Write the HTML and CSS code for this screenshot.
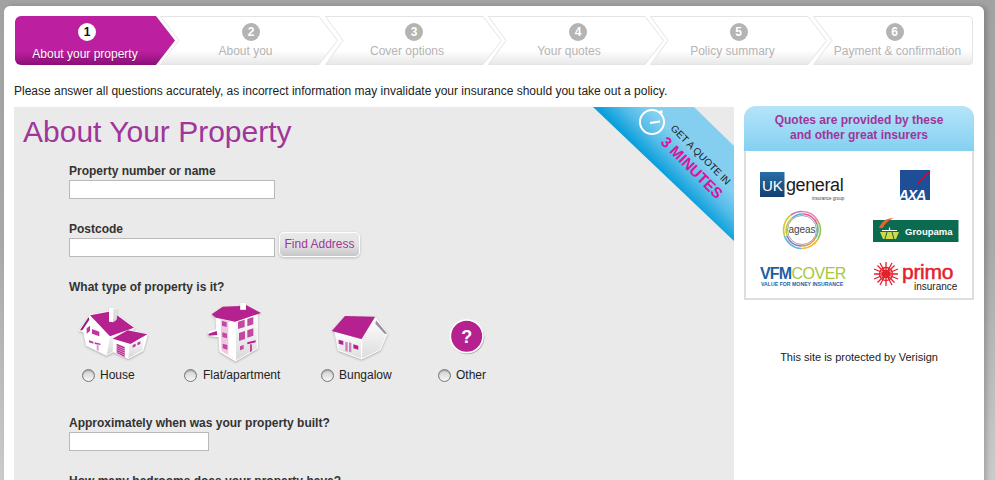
FILE: index.html
```html
<!DOCTYPE html>
<html lang="en">
<head>
<meta charset="utf-8">
<title>About Your Property</title>
<link rel="stylesheet" href="styles.css">
</head>
<body>
<div class="card">
  <nav class="stepper">
    <svg class="chevrons" width="958" height="50" viewBox="15 16 958 50">
      <defs>
        <linearGradient id="gOn" x1="0" y1="0" x2="0" y2="1"><stop offset="0" stop-color="#bc1f9f"/><stop offset=".72" stop-color="#bc1f9f"/><stop offset="1" stop-color="#8b0f78"/></linearGradient>
        <linearGradient id="gOff" x1="0" y1="0" x2="0" y2="1"><stop offset="0" stop-color="#fff"/><stop offset=".7" stop-color="#fff"/><stop offset="1" stop-color="#e8e8e8"/></linearGradient>
      </defs>
      <g fill="url(#gOff)" stroke="#e4e4e4">
        <path d="M160.500 16.500H319L337.500 40.500L319 64.500H160.500L179 40.500Z"/>
        <path d="M325.500 16.500H483L501.500 40.500L483 64.500H325.500L343 40.500Z"/>
        <path d="M488.500 16.500H645L663.500 40.500L645 64.500H488.500L506 40.500Z"/>
        <path d="M650.500 16.500H808L826.500 40.500L808 64.500H650.500L668 40.500Z"/>
        <path d="M813.500 16.500H969a3.500 3.500 0 0 1 3.500 3.500V61a3.500 3.500 0 0 1-3.500 3.500H813.500L832 40.500Z"/>
      </g>
      <path fill="url(#gOn)" d="M21 16H156L175 40.500L156 65H21a6 6 0 0 1-6-6V22a6 6 0 0 1 6-6Z"/>
    </svg>
    <div class="step step-on"><span class="num num1">1</span><span class="step-label">About your property</span></div>
    <div class="step"><span class="num num2">2</span><span class="step-label">About you</span></div>
    <div class="step"><span class="num num3">3</span><span class="step-label">Cover options</span></div>
    <div class="step"><span class="num num4">4</span><span class="step-label">Your quotes</span></div>
    <div class="step"><span class="num num5">5</span><span class="step-label">Policy summary</span></div>
    <div class="step"><span class="num num6">6</span><span class="step-label">Payment &amp; confirmation</span></div>
  </nav>

  <p class="intro">Please answer all questions accurately, as incorrect information may invalidate your insurance should you take out a policy.</p>

  <div class="columns">
    <main class="panel">
      <svg class="ribbon" width="141" height="135" viewBox="593 107 141 135">
        <defs>
          <linearGradient id="gRib" gradientUnits="userSpaceOnUse" x1="664" y1="174" x2="700" y2="138"><stop offset="0" stop-color="#0b9fdb"/><stop offset=".35" stop-color="#52bbe8"/><stop offset=".7" stop-color="#84cff0"/><stop offset="1" stop-color="#84cff0"/></linearGradient>
        </defs>
        <polygon fill="url(#gRib)" points="593,107 694,107 734,146 734,241"/>
        <g fill="none" stroke="#fff">
          <circle cx="652" cy="122" r="12" stroke-width="2"/>
          <circle cx="661" cy="112" r="1.800" fill="#fff" stroke="none"/>
          <path d="M650 123L660 121.500" stroke-width="1.800"/>
        </g>
        <text class="rib-small" transform="translate(670 129) rotate(45)">GET A QUOTE IN</text>
        <text class="rib-big" transform="translate(660 143) rotate(45)">3 MINUTES</text>
      </svg>

      <h1 class="title">About Your Property</h1>

      <div class="field">
        <label class="field-label">Property number or name</label>
        <input class="text-input" type="text">
      </div>
      <div class="field">
        <label class="field-label">Postcode</label>
        <div class="postcode-row">
          <input class="text-input" type="text">
          <button class="find-btn" type="button">Find Address</button>
        </div>
      </div>

      <div class="field types">
        <label class="field-label">What type of property is it?</label>
        <div class="options">
          <div class="option opt-house">
            <svg class="icon icon-house" width="72" height="65" viewBox="54 15 216 195">
              <defs>
                <linearGradient id="gWall" x1="0" y1="0" x2="0" y2="1"><stop offset="0" stop-color="#fff"/><stop offset="1" stop-color="#d6d6d6"/></linearGradient>
              </defs>
              <path fill="#fff" d="M56 108L90 58L147 48V40L170 38V58L226 98L218 106L264 118L250 168L205 192L160 172L140 182L78 152L70 112Z"/>
              <path fill="url(#gWall)" d="M150 127L222 100L208 108L160 132L158 170L140 180Z"/>
              <path fill="#b5218f" d="M90 61L147 50V78L170 70V60L222 98L150 124Z"/>
              <path fill="#8f1c78" d="M86 66L60 106L67 106L88 74Z"/>
              <path fill="#fff" d="M147 41H160V82L147 80Z"/>
              <path fill="#dcdcdc" d="M160 41H170V74L160 82Z"/>
              <path fill="#b5218f" d="M158 131L203 106L262 118L212 147Z"/>
              <path fill="#c0359f" d="M96 102L118 110V124L96 116ZM80 100L90 92V108L80 116Z"/>
              <path fill="#c0359f" d="M87 136L100 140V146L87 142ZM104 142L122 146L121 150L104 147Z"/>
              <path fill="#d9a0cb" d="M110 148H116V168L110 165Z"/>
              <path fill="url(#gWall)" d="M208 150L250 125L248 165L205 190Z"/>
              <path fill="#b5218f" d="M170 146L194 156V186L170 174Z"/>
              <path stroke="#fff" stroke-width="1.500" d="M170 152L194 162M170 158L194 168M170 164L194 174M170 170L194 180"/>
              <path fill="#c0359f" d="M218 150L227 146V154L218 158ZM232 143L241 139V147L232 151Z"/>
            </svg>
            <div class="radio-row"><input class="radio" type="radio" name="ptype"><span>House</span></div>
          </div>
          <div class="option opt-flat">
            <svg class="icon icon-flat" width="56" height="65" viewBox="441 15 168 195">
              <defs>
                <linearGradient id="gSide" x1="0" y1="0" x2="0" y2="1"><stop offset="0" stop-color="#fff"/><stop offset="1" stop-color="#d8d8d8"/></linearGradient>
              </defs>
              <path fill="#fff" stroke="#fff" stroke-width="3" d="M468 66L525 80L527 198L480 170L477 125L446 122L445 112L470 104Z"/>
              <path fill="url(#gSide)" stroke="#fff" stroke-width="3" d="M525 82L592 58V160L527 198Z"/>
              <path fill="#edc9e4" d="M482 72L520 82V190L484 168Z"/>
              <path fill="#fff" d="M505 80H522V190L505 180Z"/>
              <path fill="#b5218f" d="M455 58L488 35L540 33V44L558 44V30L603 54L525 80L468 68Z"/>
              <path fill="#fff" d="M541 24H558V44H541Z"/>
              <path fill="#b5218f" d="M445 116L470 108L472 120L446 122Z"/>
              <path fill="#c4489f" d="M486 78L500 82V96L486 92ZM487 112L501 116V130L487 126ZM488 146L502 150V164L488 160Z"/>
              <path fill="#c4489f" d="M534 80L554 74V96L534 102ZM562 72L580 66V88L562 94ZM537 114L555 108V132L537 138ZM562 106L580 100V122L562 128ZM540 154L551 150V162L540 166Z"/>
              <path fill="#b5218f" d="M562 142L587 136V142L562 148Z"/>
              <path fill="#c4489f" d="M570 148H576V168L570 172Z"/>
            </svg>
            <div class="radio-row radio-row-wide"><input class="radio" type="radio" name="ptype"><span>Flat/apartment</span></div>
          </div>
          <div class="option opt-bungalow">
            <svg class="icon icon-bungalow" width="57" height="65" viewBox="96 15 171 195">
              <defs>
                <linearGradient id="gBung" x1="0" y1="0" x2="0" y2="1"><stop offset="0" stop-color="#fff"/><stop offset="1" stop-color="#dcdcdc"/></linearGradient>
              </defs>
              <path fill="url(#gBung)" stroke="#fff" stroke-width="3" d="M105 112L185 135V192L115 166Z"/>
              <path fill="url(#gBung)" stroke="#fff" stroke-width="3" d="M226 68L262 115L240 165L185 192V132Z"/>
              <path fill="#9a8fa0" d="M228 76L262 116L254 116L226 86Z"/>
              <path fill="#b5218f" d="M135 63L225 65L185 132L95 108Z"/>
              <path fill="#b5218f" d="M116 134L130 138V150L116 146ZM160 148L175 152V164L160 160Z"/>
              <path fill="#d07ebc" d="M136 140L143 142V170L136 168ZM147 142L154 144V172L147 170Z"/>
            </svg>
            <div class="radio-row radio-row-tight"><input class="radio" type="radio" name="ptype"><span>Bungalow</span></div>
          </div>
          <div class="option opt-other">
            <svg class="icon icon-other" width="36" height="65" viewBox="447 15 108 195">
              <circle class="q-shadow" cx="502" cy="127" r="51"/>
              <circle class="q-disc" cx="500" cy="124" r="49"/>
              <text class="q-mark" x="500" y="143">?</text>
            </svg>
            <div class="radio-row"><input class="radio" type="radio" name="ptype"><span>Other</span></div>
          </div>
        </div>
      </div>

      <div class="field">
        <label class="field-label">Approximately when was your property built?</label>
        <input class="text-input text-input-short" type="text">
      </div>
      <div class="field">
        <label class="field-label">How many bedrooms does your property have?</label>
      </div>
    </main>

    <aside class="sidebar">
      <div class="insurers">
        <h2 class="insurers-head">Quotes are provided by these<br>and other great insurers</h2>
        <div class="logos">
          <svg class="logo" width="88" height="30" viewBox="0 0 88 30">
            <defs><linearGradient id="gUk" x1="0" y1="0" x2="0" y2="1"><stop offset="0" stop-color="#2a6ea8"/><stop offset="1" stop-color="#123f6e"/></linearGradient></defs>
            <rect x="1" y="2" width="24.500" height="25" fill="url(#gUk)"/>
            <text class="lg-uk" x="3" y="21">UK</text>
            <text class="lg-general" x="27" y="20.500">general</text>
            <text class="lg-group" x="53" y="29.500">insurance group</text>
          </svg>
          <svg class="logo" width="32" height="30" viewBox="1 0 32 30">
            <rect x="1" y="0" width="30" height="30" fill="#1d4e96"/>
            <path d="M18 14L31 1" stroke="#e4002b" stroke-width="1.300"/>
            <text class="lg-axa" x="13" y="29.500">AXA</text>
          </svg>
          <svg class="logo" width="42" height="42" viewBox="1 0 42 42">
            <circle cx="21" cy="21" r="14.500" fill="#fff" stroke="#8c8c8c" stroke-width=".8"/>
            <g fill="none" stroke-width="1.600">
              <path stroke="#ef7fae" d="M21 2.500A18.500 18.500 0 0 1 37 12"/>
              <path stroke="#e45ca0" d="M23 5A16 16 0 0 1 36 15"/>
              <path stroke="#8fc652" d="M37 12A18.500 18.500 0 0 1 37 30"/>
              <path stroke="#5fb98a" d="M36 15A16 16 0 0 1 35 28"/>
              <path stroke="#f2b632" d="M37 30A18.500 18.500 0 0 1 20 39.500"/>
              <path stroke="#ee8a3a" d="M35 28A16 16 0 0 1 20 37"/>
              <path stroke="#5fb9d5" d="M20 39.500A18.500 18.500 0 0 1 3.500 27"/>
              <path stroke="#8d78c4" d="M20 37A16 16 0 0 1 6 27"/>
              <path stroke="#d8c83c" d="M3.500 27A18.500 18.500 0 0 1 10 6"/>
              <path stroke="#b7c94a" d="M6 27A16 16 0 0 1 11 9"/>
              <path stroke="#c86fb8" d="M10 6A18.500 18.500 0 0 1 21 2.500"/>
              <path stroke="#58b0d8" d="M11 9A16 16 0 0 1 23 5"/>
            </g>
            <text class="lg-ageas" x="21" y="24">ageas</text>
          </svg>
          <svg class="logo" width="86" height="26" viewBox="0 0 86 26">
            <rect x="0" y="3" width="85.500" height="22" fill="#0b6b50"/>
            <path d="M6 11C8 5 13 1 21 1C16 3 12 6 10 11Z" fill="#e8632a"/>
            <path d="M7 15H26L23 22H10Z" fill="#cfd94a"/>
            <path d="M14 15L12 22M19 15L21 22" stroke="#0b6b50"/>
            <path d="M9 13.500H24M16.500 10.500V14" stroke="#fff" stroke-width="1.200"/>
            <text class="lg-groupama" x="32" y="18">Groupama</text>
          </svg>
          <svg class="logo" width="88" height="24" viewBox="0 0 88 24">
            <text class="lg-vfm" x="1" y="16">VFM</text>
            <text class="lg-cover" x="32.500" y="16">COVER</text>
            <text class="lg-tag" x="2" y="23">VALUE FOR MONEY INSURANCE</text>
          </svg>
          <svg class="logo" width="88" height="28" viewBox="0 0 88 28">
            <g stroke="#e3202c" stroke-width="1.300" fill="none">
              <path d="M2 13H26M14 1V25M5.500 4.500L22.500 21.500M22.500 4.500L5.500 21.500M8 2L20 24M20 2L8 24M2 8L26 18M26 8L2 18"/>
              <circle cx="14" cy="13" r="6.500"/>
              <circle cx="14" cy="13" r="3.500"/>
            </g>
            <text class="lg-primo" x="30" y="18">primo</text>
            <text class="lg-ins" x="42" y="28.500">insurance</text>
          </svg>
        </div>
      </div>
      <p class="protected">This site is protected by Verisign</p>
    </aside>
  </div>
</div>
</body>
</html>
```

FILE: styles.css
```css
* { box-sizing: border-box; }

html, body {
  height: 480px;
  margin: 0;
  overflow: hidden;
}

body {
  padding: 6px 11px 0 4px;
  background: linear-gradient(#a2a2a2, #a8a8a8 50%, #cbcbcb);
  font-family: "Liberation Sans", Arial, sans-serif;
  color: #222;
}

.card {
  width: 980px;
  height: 520px;
  padding: 10px 11px 0 10px;
  background: #fff;
  border-radius: 6px 6px 0 0;
  box-shadow: 3px 0 5px rgba(0, 0, 0, .18);
}

/* Stepper */
.stepper {
  position: relative;
  display: grid;
  grid-template-columns: 157px 147px 176px 148px 179px 151px;
  width: 958px;
  height: 50px;
  margin-left: 1px;
}

.chevrons {
  position: absolute;
  left: 0;
  top: 0;
}

.step {
  position: relative;
  display: flex;
  flex-direction: column;
  align-items: center;
  padding-top: 7px;
  font-size: 12px;
  line-height: 14px;
  color: #b4b4b4;
}

.step-on {
  padding-right: 17px;
  color: #fff;
  text-shadow: 0 1px 1px rgba(80, 0, 70, .5);
}

.step-label {
  margin-top: 3px;
  white-space: nowrap;
}

.step-on .step-label { margin-top: 6px; }

.num {
  width: 18px;
  height: 18px;
  border-radius: 50%;
  background: #b4b4b4;
  color: #fff;
  font-size: 12px;
  font-weight: bold;
  line-height: 18px;
  text-align: center;
}

.num1 { margin-left: 4px; background: #fff; color: #111; text-shadow: none; }
.num2 { margin-left: 11px; }
.num3 { margin-left: 14px; }
.num4 { margin-left: 18px; }
.num5 { margin-left: 12px; }
.num6 { margin-right: 6px; }

.intro {
  margin: 18px 0 9px;
  font-size: 12px;
  line-height: 14px;
}

/* Columns */
.columns {
  display: flex;
  gap: 10px;
}

.panel {
  position: relative;
  flex: 0 0 720px;
  height: 420px;
  padding: 7px 0 0 55px;
  background: #eaeaea;
}

.ribbon {
  position: absolute;
  right: 0;
  top: 0;
}

.rib-small {
  font-size: 10px;
  fill: #1a1a1a;
}

.rib-big {
  font-size: 15px;
  font-weight: bold;
  fill: #e0109a;
}

.title {
  margin: 0 0 14px -46px;
  font-size: 30px;
  font-weight: normal;
  line-height: 36px;
  color: #a0359a;
}

.field {
  margin-bottom: 23px;
}

.field-label {
  display: block;
  margin-bottom: 2px;
  font-size: 12px;
  font-weight: bold;
  line-height: 14px;
  color: #333;
  white-space: nowrap;
}

.text-input {
  display: block;
  width: 206px;
  height: 19px;
  padding: 0 2px;
  border: 1px solid #b9b9b9;
  background: #fff;
}

.text-input-short { width: 140px; }

.postcode-row {
  display: flex;
  align-items: flex-end;
  gap: 4px;
  height: 19px;
}

.find-btn {
  width: 81px;
  height: 25px;
  padding: 0 0 2px;
  border: 1px solid #fff;
  border-radius: 5px;
  background: linear-gradient(#e9e9e9, #e2e2e2 55%, #c6c6c6);
  box-shadow: 0 1px 3px rgba(0, 0, 0, .2);
  font-family: inherit;
  font-size: 12px;
  color: #a0359a;
}

/* Property type */
.types {
  margin-bottom: 23px;
}

.options {
  display: flex;
  height: 99px;
  margin: -2px 0 0 13px;
  padding-top: 6px;
}

.option { flex: none; }
.opt-house { width: 102px; }
.opt-flat { width: 137px; }
.opt-bungalow { width: 117px; }
.opt-other { width: 80px; }

.icon {
  display: block;
  filter: drop-shadow(0 1px 1px rgba(0, 0, 0, .25));
}

.icon-house { margin-left: -4px; }
.icon-flat { margin-left: 23px; }
.icon-bungalow { margin-left: 11px; }
.icon-other { margin-left: 11px; filter: none; }

.radio-row {
  display: flex;
  align-items: center;
  gap: 5px;
  height: 14px;
  margin-top: 3px;
  font-size: 12px;
  color: #222;
  white-space: nowrap;
}

.radio-row-wide { gap: 6px; }
.radio-row-tight { gap: 5px; }

.radio {
  appearance: none;
  flex: none;
  width: 13px;
  height: 13px;
  margin: 0;
  border: 1px solid #777;
  border-radius: 50%;
  background: linear-gradient(#d0d0d0, #f6f6f6);
  box-shadow: inset 0 1px 1px rgba(0, 0, 0, .25);
}

.q-shadow { fill: rgba(0, 0, 0, .3); }
.q-disc { fill: #b5218f; stroke: #fff; stroke-width: 5; }
.q-mark {
  font-size: 54px;
  font-weight: bold;
  fill: #fff;
  text-anchor: middle;
}

/* Sidebar */
.sidebar {
  flex: 0 0 230px;
}

.insurers {
  height: 194px;
  border: 2px solid #dedede;
  border-top: 0;
  border-radius: 12px 12px 0 0;
  margin-top: -1px;
}

.insurers-head {
  height: 45px;
  margin: 0 -2px;
  padding-top: 7px;
  border-radius: 12px 12px 0 0;
  background: linear-gradient(#b6e4f9, #84d0f1);
  font-size: 12px;
  font-weight: bold;
  line-height: 15px;
  color: #a0359a;
  text-align: center;
}

.logos {
  display: grid;
  grid-template-columns: 113px 113px;
  grid-auto-rows: 45px;
  justify-items: center;
  align-items: center;
  padding-top: 11px;
}

.logo { display: block; overflow: visible; }

.lg-uk { font-size: 15px; fill: #fff; }
.lg-general { font-size: 18px; letter-spacing: -.4px; fill: #1c1c1c; }
.lg-group { font-size: 4.500px; fill: #444; }
.lg-axa { font-size: 14px; font-weight: bold; font-style: italic; letter-spacing: -1px; fill: #fff; text-anchor: middle; }
.lg-ageas { font-size: 10px; fill: #444; text-anchor: middle; }
.lg-groupama { font-size: 9.500px; font-weight: bold; fill: #fff; }
.lg-vfm { font-size: 16px; font-weight: bold; letter-spacing: -.8px; fill: #1d5fa8; }
.lg-cover { font-size: 16px; letter-spacing: -.5px; fill: #a5c83c; }
.lg-tag { font-size: 5.200px; font-weight: bold; fill: #1d5fa8; }
.lg-primo { font-size: 21px; letter-spacing: -.3px; font-weight: normal; stroke: #e3202c; stroke-width: .5px; fill: #e3202c; }
.lg-ins { font-size: 10px; fill: #222; }

.protected {
  margin: 50px 0 0;
  font-size: 11px;
  line-height: 14px;
  color: #222;
  text-align: center;
}
```
